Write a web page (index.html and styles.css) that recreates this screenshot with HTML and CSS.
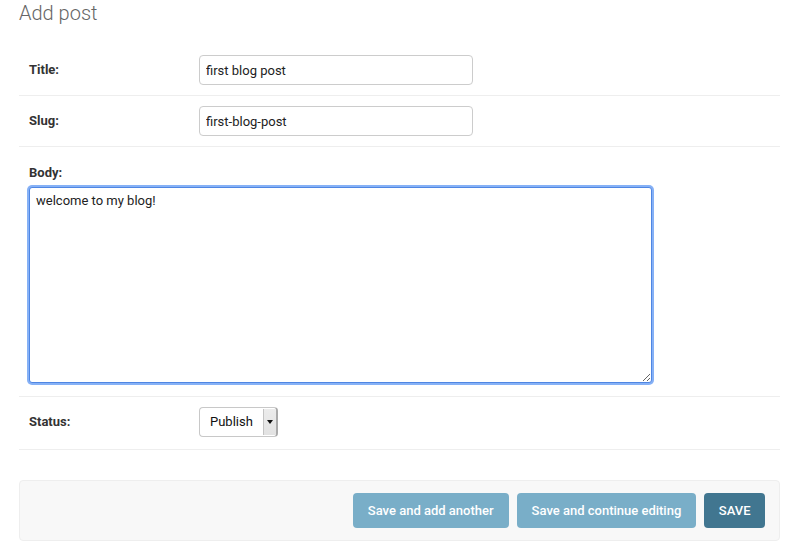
FILE: index.html
```html
<!DOCTYPE html>
<html lang="en">
<head>
<meta charset="utf-8">
<title>Add post</title>
<link rel="stylesheet" href="styles.css">
</head>
<body>
<div class="content">
  <h1 class="page-title">Add post</h1>
  <form class="post-form">
    <fieldset class="module aligned">
      <div class="form-row">
        <label class="required" for="id_title">Title:</label>
        <input class="text-input" type="text" id="id_title" value="first blog post">
      </div>
      <div class="form-row">
        <label class="required" for="id_slug">Slug:</label>
        <input class="text-input" type="text" id="id_slug" value="first-blog-post">
      </div>
      <div class="form-row stacked">
        <label class="required stacked-label" for="id_body">Body:</label>
        <textarea class="large-text" id="id_body">welcome to my blog!</textarea>
      </div>
      <div class="form-row status-row">
        <label class="required" for="id_status">Status:</label>
        <div class="fake-select" id="id_status">
          <span class="select-value">Publish</span>
          <span class="select-arrow"><span class="caret"></span></span>
        </div>
      </div>
    </fieldset>
    <div class="submit-row">
      <button type="button" class="btn">Save and add another</button>
      <button type="button" class="btn">Save and continue editing</button>
      <button type="button" class="btn btn-default">SAVE</button>
    </div>
  </form>
</div>
</body>
</html>
```
FILE: styles.css
```css
* {
  box-sizing: border-box;
}

html, body {
  margin: 0;
  padding: 0;
  background: #fff;
}

body {
  font-family: Roboto, "Liberation Sans", Arial, sans-serif;
  font-size: 13px;
  color: #333;
}

.content {
  width: 761px;
  margin-left: 19px;
  padding-top: 2px;
}

.page-title {
  margin: 0 0 20px;
  font-size: 20px;
  font-weight: 300;
  color: #666;
  line-height: 23px;
}

.post-form {
  margin: 0;
}

.module {
  margin: 0;
  padding: 0;
  border: none;
  min-width: 0;
}

.form-row {
  display: flex;
  align-items: center;
  padding: 10px;
  border-bottom: 1px solid #eee;
}

.form-row label {
  width: 170px;
  flex: none;
  padding-right: 10px;
  font-weight: bold;
  color: #333;
  font-size: 13px;
  line-height: 16px;
}

.text-input {
  width: 274px;
  height: 30px;
  padding: 5px 6px;
  border: 1px solid #ccc;
  border-radius: 4px;
  font-family: Roboto, "Liberation Sans", Arial, sans-serif;
  font-size: 13px;
  color: #222;
  background: #fff;
  outline: none;
}

.stacked {
  display: block;
  padding-bottom: 10px;
}

.stacked .stacked-label {
  display: block;
  width: auto;
  padding: 8px 0 6px;
  height: 30px;
}

.large-text {
  display: block;
  width: 623px;
  height: 196px;
  margin-left: 0;
  margin-bottom: 3px;
  padding: 5px 6px;
  border: 1px solid #4f86e3;
  border-radius: 3px;
  box-shadow: 0 0 0 2px #86b1f6;
  font-family: Roboto, "Liberation Sans", Arial, sans-serif;
  font-size: 13px;
  line-height: 16px;
  color: #222;
  outline: none;
  resize: both;
}

.status-row {
  padding-bottom: 12px;
}

.fake-select {
  display: flex;
  align-items: stretch;
  width: 79px;
  height: 30px;
  border: 1px solid #c8c8c8;
  border-right: 2px solid #aaa;
  border-radius: 4px;
  background: #fff;
  overflow: hidden;
}

.select-value {
  flex: 1;
  padding-left: 10px;
  line-height: 28px;
  font-size: 13px;
  color: #111;
}

.select-arrow {
  width: 13px;
  margin: 1px 0;
  display: flex;
  align-items: center;
  justify-content: center;
  background: linear-gradient(#ececec, #e2e2e2);
  border-left: 1px solid #c4c4c4;
}

.caret {
  width: 0;
  height: 0;
  border-left: 3px solid transparent;
  border-right: 3px solid transparent;
  border-top: 4px solid #111;
}

.submit-row {
  display: flex;
  justify-content: flex-end;
  gap: 8px;
  margin-top: 30px;
  padding: 12px 14px;
  background: #f8f8f8;
  border: 1px solid #eee;
  border-radius: 4px;
}

.btn {
  height: 35px;
  padding: 0 15px;
  border: none;
  border-radius: 4px;
  background: #79aec8;
  color: #fff;
  font-family: Roboto, "Liberation Sans", Arial, sans-serif;
  font-size: 13px;
  font-weight: 500;
  line-height: 15px;
  cursor: pointer;
}

.btn-default {
  background: #417690;
  padding: 0 14.5px;
}
```
